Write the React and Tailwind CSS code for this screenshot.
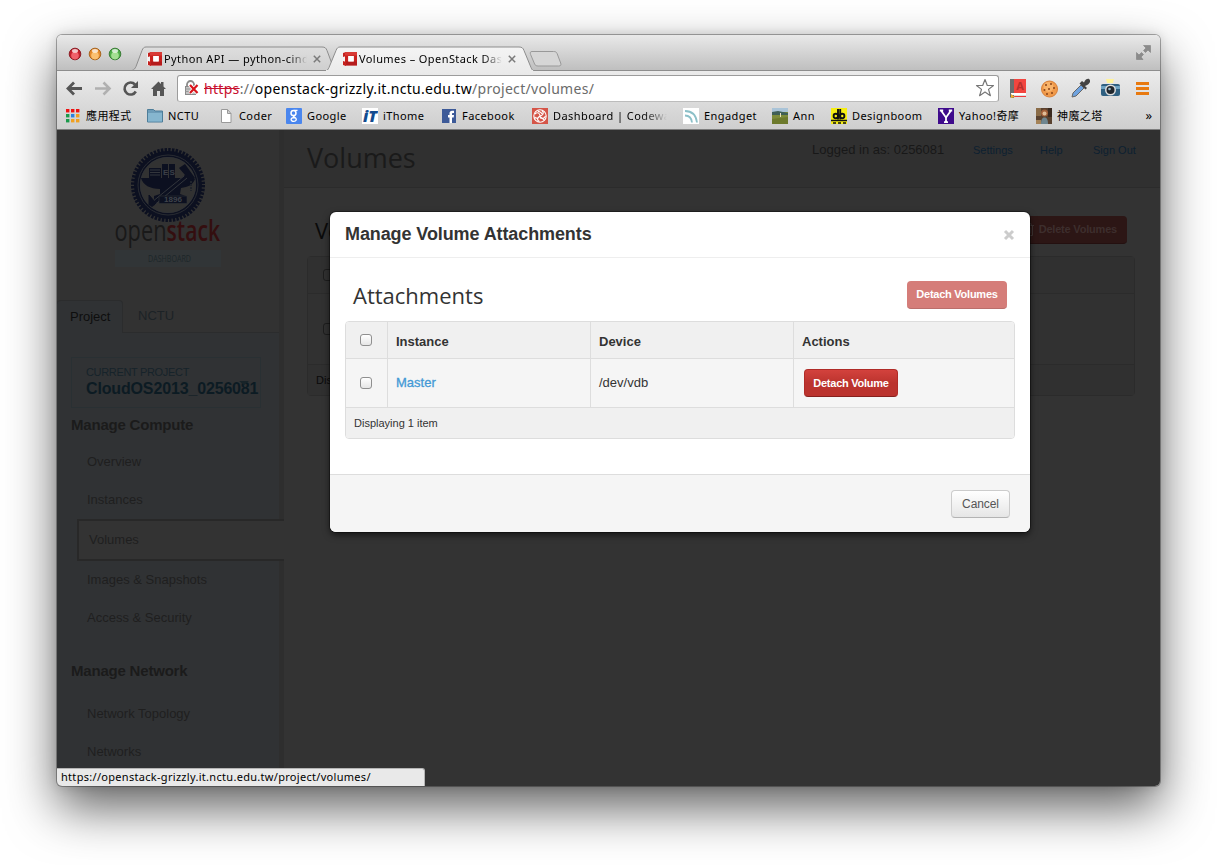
import React from "react";

const UI = "font-['Noto_Sans','Noto_Sans_CJK_TC',sans-serif]";

/* ---------- browser chrome icons ---------- */

function Favicon() {
  return (
    <svg width="16" height="16" viewBox="0 0 16 16" className="shrink-0">
      <path d="M0 2.5 3 1h12v14H2L0 13.5z" fill="#f4f0f0" />
      <path d="M1 2 4 1v4L1 6zM1 10l3 1v4l-3-1z" fill="#c4201d" />
      <path d="M3 1h12v13.5H3zM6.3 5v5.6h5.4V5z" fill="#c9211e" fillRule="evenodd" />
      <path d="M3 1h12v3.4H3z" fill="#d83a35" />
      <path d="M4 10.6h11v4H4z" fill="#a8181a" opacity=".6" />
      <path d="M6.3 5h5.4v5.6H6.3z" fill="#fff" />
    </svg>
  );
}

function TrafficLights() {
  const lights = [
    ["#f0606a", "#c41e2a", "#8d1f26"],
    ["#fbc070", "#e58a2a", "#a8651f"],
    ["#a4df92", "#4fae48", "#3b7d37"],
  ];
  return (
    <svg width="60" height="16" viewBox="0 0 60 16" className="shrink-0">
      {lights.map(([a, b, c], i) => (
        <g key={i}>
          <circle cx={8 + i * 20} cy="8" r="5.8" fill={b} stroke={c} strokeWidth="1" />
          <circle cx={8 + i * 20} cy="9.6" r="3.8" fill={a} />
          <ellipse cx={8 + i * 20} cy="4.9" rx="3" ry="1.8" fill="#fff" opacity=".75" />
        </g>
      ))}
    </svg>
  );
}

function TabClose() {
  return (
    <svg width="8" height="8" viewBox="0 0 8 8" className="shrink-0">
      <path d="M.8.8 7.2 7.2M7.2.8.8 7.2" stroke="#7a7a7a" strokeWidth="1.5" />
    </svg>
  );
}

function TabStrip() {
  return (
    <div className="flex h-[36px] w-full items-start justify-between bg-gradient-to-b from-[#e9e9e9] to-[#bebebe]">
      <div className="relative h-[36px] w-[520px]">
        <svg width="1103" height="36" viewBox="0 0 1103 36" className="absolute left-0 top-0">
          <defs>
            <linearGradient id="on" x1="0" y1="0" x2="0" y2="1">
              <stop offset="0" stopColor="#f4f4f4" />
              <stop offset="1" stopColor="#ebebeb" />
            </linearGradient>
            <linearGradient id="off" x1="0" y1="0" x2="0" y2="1">
              <stop offset="0" stopColor="#dedede" />
              <stop offset="1" stopColor="#cfcfcf" />
            </linearGradient>
          </defs>
          <path d="M0 35.5H1103" stroke="#8d8d8d" />
          <path d="M75 35.5c2-.5 3-2 4-4l6-16c1-2.500 2-3.500 4-3.500h176c3 0 4 1 5 3.500l6 16c.7 2 2 3.500 4 4z" fill="url(#off)" stroke="#8d8d8d" />
          <path d="M268 36.500c2-.5 3-2 4-4l7-17c1-2.500 2-3.500 4-3.500h179c3 0 4 1 5 3.500l7 17c.7 2 2 3.500 4 4z" fill="url(#on)" stroke="#8d8d8d" />
          <path d="M269 36h207" stroke="#ebebeb" strokeWidth="2" />
          <path d="M475 16.500h21.500c2 0 3 .6 3.600 2l3.600 9.500c.7 2 0 3-2 3h-20.500c-2 0-3-.6-3.600-2l-4-9.500c-.8-2-.2-3 1.400-3z" fill="#d6d6d6" stroke="#999" />
        </svg>
        <div className="relative flex h-[36px] items-center pt-[12px]">
          <div className="flex w-[73px] justify-start pb-[10px] pl-[10px]">
            <TrafficLights />
          </div>
          <div className="ml-[17px] flex w-[195px] items-center">
            <Favicon />
            <span className="ml-px w-[143px] overflow-hidden whitespace-nowrap bg-gradient-to-r from-black from-85% to-[#d6d6d6] bg-clip-text text-[11px] tracking-[0.42px] text-transparent">
              Python API — python-cinderclient
            </span>
            <span className="ml-[6px]"><TabClose /></span>
          </div>
          <div className="flex w-[185px] items-center">
            <Favicon />
            <span className="ml-px w-[143px] overflow-hidden whitespace-nowrap bg-gradient-to-r from-black from-85% to-[#efefef] bg-clip-text text-[11px] tracking-[0.42px] text-transparent">
              Volumes – OpenStack Dashboard
            </span>
            <span className="ml-[6px]"><TabClose /></span>
          </div>
        </div>
      </div>
      <svg width="15" height="15" viewBox="0 0 15 15" className="mr-[9px] mt-[10px]">
        <path d="M7.500.5H14.500V7.500L12 5 9.500 7.500 7.500 5.500 10 3zM7 14.500H.5V7.500L3 10l2.500-2.500L7.500 9.500 5 12z" fill="#8b8b8b" stroke="#777" strokeWidth=".5" />
      </svg>
    </div>
  );
}

function Toolbar() {
  return (
    <div className="flex h-[34px] items-center">
      <svg width="120" height="34" viewBox="0 0 120 34" className="shrink-0" fill="none">
        <path d="M25 17.500H11.500M17 11.500l-6 6 6 6" stroke="#555" strokeWidth="2.800" />
        <path d="M38 17.500H51.500M46.500 11.500l6 6-6 6" stroke="#b0b0b0" strokeWidth="2.600" />
        <path d="M78.800 20.500a6 6 0 1 1-.8-7" stroke="#555" strokeWidth="2.600" />
        <path d="M81 10v7h-7z" fill="#555" />
        <path d="M94 18l7.500-7.500 2.500 2.500v-2h2.500v4.500l2.500 2.500h-2v7h-4v-5h-3v5h-4v-7z" fill="#555" />
      </svg>
      <div className="flex h-[27px] w-[822px] items-center rounded-[3px] border border-[#9c9c9c] border-b-[#bcbcbc] bg-white">
        <svg width="17" height="18" viewBox="0 0 17 18" className="ml-[6px] shrink-0" fill="none">
          <path d="M3 8V5.500a3.500 3.500 0 0 1 7 0V8" stroke="#8a8a8a" strokeWidth="1.800" />
          <rect x="1.500" y="7.500" width="10" height="8" fill="#c4c4c4" stroke="#8a8a8a" />
          <path d="M1.500 10h10M1.500 12.500h10" stroke="#9a9a9a" />
          <path d="M6 6l7.500 8M13.500 6 6 14" stroke="#fff" strokeWidth="4" />
          <path d="M6 6l7.500 8M13.500 6 6 14" stroke="#d8141c" strokeWidth="2.200" />
        </svg>
        <span className="ml-[3px] flex-1 whitespace-nowrap text-[14px] tracking-[0.31px] text-[#6b6b6b]">
          <span className="text-[#c8102e] line-through decoration-[#c8102e]">https</span>://
          <span className="text-black">openstack-grizzly.it.nctu.edu.tw</span>/project/volumes/
        </span>
        <svg width="20" height="20" viewBox="0 0 20 20" className="mr-[3px]">
          <path d="M10 1.500l2.300 6h6.200l-5 3.900 1.900 6.300L10 14l-5.400 3.700 1.900-6.300-5-3.900h6.200z" fill="#fff" stroke="#777" strokeWidth="1.200" strokeLinejoin="round" />
        </svg>
      </div>
      <svg width="161" height="34" viewBox="0 0 161 34" className="shrink-0">
        <path d="M11 8h4v19h-3l-1-1z" fill="#6d6d6d" />
        <path d="M15 8h12v14H15z" fill="#f2453f" />
        <path d="M12 22h15v2H12z" fill="#fff" />
        <path d="M13 25h14v1H13z" fill="#ef3b3b" />
        <path d="M12 23l4 3-4 1z" fill="#f0b030" />
        <text x="21" y="19" textAnchor="middle" fontSize="11" fontWeight="bold" fill="#b8302c">A</text>
        <circle cx="50.500" cy="18" r="8" fill="#f09a4a" stroke="#d9813a" />
        <circle cx="49.500" cy="16" r="5" fill="#f8b36a" />
        <g fill="#8a4318">
          <circle cx="47" cy="14" r="1" /><circle cx="52" cy="13" r="1" /><circle cx="55" cy="17" r="1" />
          <circle cx="50" cy="18" r="1" /><circle cx="45.500" cy="19" r="1" /><circle cx="53" cy="22" r="1" /><circle cx="48" cy="23" r="1" />
        </g>
        <path d="M73 26l1-4 8-8 3 3-8 8z" fill="#6fa3e0" stroke="#666" />
        <path d="M80.500 12.500l6 6 1.500-1.500-2-2c3-1 5.500-3 5-5.500s-4-2.500-6 2l-2-1.500z" fill="#444" />
        <path d="M107 8h8l-1 4h-6z" fill="#fff39a" />
        <rect x="102" y="13" width="19" height="12" rx="2" fill="#2e5f80" />
        <path d="M102 15h19v3h-19z" fill="#6ea3c2" />
        <circle cx="111.500" cy="19" r="5.500" fill="#ddd" />
        <circle cx="111.500" cy="19" r="4" fill="#20262c" />
        <circle cx="110.500" cy="18" r="1.300" fill="#9bc" />
        <path d="M137 12.500h13M137 17.500h13M137 22.500h13" stroke="#e8790f" strokeWidth="3" />
      </svg>
    </div>
  );
}

/* ---------- bookmark icons ---------- */

const marks = {
  apps: (
    <g>
      {["#e11", "#e11", "#e11", "#1a9a4a", "#2a80e0", "#f0a020", "#1a9a4a", "#f0a020", "#f0a020"].map((c, i) => (
        <rect key={i} x={1 + (i % 3) * 5} y={1 + Math.floor(i / 3) * 5} width="3.400" height="3.400" fill={c} />
      ))}
    </g>
  ),
  folder: (
    <g>
      <path d="M.5 3V1.500h6L8 3h7.500v11H.5z" fill="#6d9cb8" stroke="#4d7d99" />
      <path d="M1 5h14v8.500H1z" fill="#86b6cf" />
    </g>
  ),
  doc: <path d="M3.500 1.500h6l3.500 4v9H3.500zM9.500 1.500v4H13" fill="#fff" stroke="#999" />,
  google: (
    <g>
      <rect width="16" height="16" rx="1" fill="#4a86ee" />
      <ellipse cx="7.500" cy="5" rx="2.500" ry="2.600" fill="none" stroke="#fff" strokeWidth="1.500" />
      <path d="M8 2.300h3.500M8 7.500c-2 1.200 2.500 1.800 2.300 4-.2 2.400-5.300 2.400-5.200 0 .1-1.500 2-2 3.700-2" fill="none" stroke="#fff" strokeWidth="1.300" />
    </g>
  ),
  it: (
    <g>
      <rect width="16" height="16" fill="#fff" />
      <text x="8" y="14" textAnchor="middle" fontSize="15" fontWeight="900" fontStyle="italic" textLength="14" lengthAdjust="spacingAndGlyphs" fill="#124c90">iT</text>
    </g>
  ),
  fb: (
    <g>
      <rect x="1" y="1" width="14" height="14" fill="#3d5a98" />
      <path d="M8.500 15V9.500H7V7h1.500V5.500C8.500 3.500 9.500 2.700 11 2.700h2V5h-1.200c-.6 0-.8.300-.8.800V7h2l-.3 2.500H11V15z" fill="#fff" />
    </g>
  ),
  codewars: (
    <g fill="none" stroke="#fff" strokeWidth="1.100">
      <rect width="16" height="16" fill="#d55548" stroke="none" />
      <circle cx="8" cy="8" r="6.200" />
      <path d="M3 6c3-3 5 0 5 2M10 2.500c3 3 0 5-2 5.500M13.500 8c-2 4-4 2-5.500.5M7.500 13.500C4 12 6 9 8 8M2.500 9c2 2 4 1 5.500-1M6 3c1 1 3 1 4 3M12 12c-1-2-2-2-4-2" />
    </g>
  ),
  engadget: (
    <g fill="none">
      <rect width="16" height="16" fill="#fff" />
      <path d="M2 3c7 0 11 4 12 11.500M2 7.500c4 0 6.500 2.500 7 7" stroke="#8cc0c8" strokeWidth="1.800" />
    </g>
  ),
  ann: (
    <g>
      <rect width="16" height="16" fill="#7d8c3a" />
      <path d="M0 0h16v4H0z" fill="#aac4d8" />
      <path d="M0 4l6-1 10 2v2H0z" fill="#3f5f57" />
      <path d="M0 11l16-2v7H0z" fill="#6d7a2c" />
      <path d="M8 5h1v4H8z" fill="#e8e2c0" />
    </g>
  ),
  db: (
    <g>
      <rect width="16" height="16" fill="#f6ee13" />
      <g fill="none" stroke="#111" strokeWidth="1.900">
        <circle cx="4.800" cy="8" r="2.200" /><circle cx="11.200" cy="8" r="2.200" />
        <path d="M7 1v10.500M9.200 1v10.500" />
      </g>
      <path d="M0 12.500h16M2 15h3M7 15h3M12 15h3" stroke="#111" strokeWidth="1.600" />
    </g>
  ),
  yahoo: (
    <g>
      <rect width="16" height="16" fill="#3f0b8c" />
      <path d="M3 2.500l5 7 5-7M8 9v5.500M1.800 2.500h3.400M10.800 2.500h3.400M6 14.200h4" fill="none" stroke="#fff" strokeWidth="1.800" />
    </g>
  ),
  tower: (
    <g>
      <rect width="16" height="16" fill="#5a4230" />
      <path d="M0 0h5v8H0z" fill="#8a6c48" />
      <path d="M12 0h4v9h-4z" fill="#3a2a20" />
      <circle cx="8.500" cy="5" r="3.500" fill="#a3603a" />
      <circle cx="8.500" cy="5.500" r="2" fill="#e0bd98" />
      <path d="M5 16c0-5 1.500-6.500 3.500-6.500S12 11 12 16z" fill="#6f8690" />
      <path d="M0 12h5v4H0z" fill="#a58358" />
    </g>
  ),
};

const bookmarks = [
  ["apps", "應用程式", "w-[82px]", ""],
  ["folder", "NCTU", "w-[71px]", ""],
  ["doc", "Coder", "w-[68px]", ""],
  ["google", "Google", "w-[76px]", ""],
  ["it", "iThome", "w-[79px]", ""],
  ["fb", "Facebook", "w-[91px]", ""],
  ["codewars", "Dashboard | Codewars", "w-[151px]", "w-[114px]"],
  ["engadget", "Engadget", "w-[89px]", ""],
  ["ann", "Ann", "w-[59px]", ""],
  ["db", "Designboom", "w-[107px]", ""],
  ["yahoo", "Yahoo!奇摩", "w-[98px]", ""],
  ["tower", "神魔之塔", "w-[100px]", ""],
];

function Bookmarks() {
  return (
    <div className="flex h-[24px] items-center justify-between pl-[8px] pr-[8px] text-[11px] text-black">
      <div className="flex pb-[2px]">
        {bookmarks.map(([id, label, w, tw]) => (
          <div key={id} className={"flex shrink-0 items-center gap-[5px] whitespace-nowrap " + w}>
            <svg width="16" height="16" viewBox="0 0 16 16" className="shrink-0">{marks[id]}</svg>
            {tw ? (
              <span className={"overflow-hidden bg-gradient-to-r from-black from-75% to-[#d4d4d4] bg-clip-text tracking-[0.42px] text-transparent " + tw}>{label}</span>
            ) : (
              <span className="tracking-[0.42px]">{label}</span>
            )}
          </div>
        ))}
      </div>
      <span className="pb-[3px] text-[13px]">»</span>
    </div>
  );
}

/* ---------- dashboard page behind the backdrop ---------- */

function SealLogo() {
  return (
    <svg width="120" height="124" viewBox="0 0 120 124">
      <circle cx="60" cy="40" r="35" fill="none" stroke="#0c1020" strokeWidth="4" strokeDasharray="2.400 1.265" />
      <circle cx="60" cy="40" r="31" fill="none" stroke="#0c1020" strokeWidth="6" />
      <circle cx="60" cy="40" r="30" fill="none" stroke="#303236" strokeWidth=".8" />
      <circle cx="60" cy="40" r="27.500" fill="none" stroke="#303236" strokeWidth="1" />
      <path d="M33 33h41l4-2 9 3c-2 6-7 8-14 9l-1 6 6 2v4H46v-4l6-2v-5c-10 0-17-4-19-11z" fill="#0c1020" />
      <path d="M41 23h12v10H41zM54 19h6v14h-6zM61 19h6v14h-6z" fill="#0c1020" />
      <path d="M42 25h10M42 27.500h10M42 30h10" stroke="#33363c" />
      <text x="55" y="30" fontSize="8" fill="#3c4048" fontWeight="bold">E</text>
      <text x="61.500" y="30" fontSize="8" fill="#3c4048" fontWeight="bold">S</text>
      <path d="M41 60 46 56 77 30 71 23l6-4 10 14-5 4-4-4-30 26-4 3z" fill="#0c1020" />
      <path d="M44 57 76 31M47 59.500 79 33" stroke="#33363c" strokeWidth="1" />
      <path d="M41 50v10l6-3zM42 53l6 6" stroke="#0c1020" fill="#0c1020" />
      <rect x="51" y="51" width="28" height="7.500" fill="#0c1020" stroke="#303236" strokeWidth=".6" />
      <text x="65" y="57.300" fontSize="6.500" fontWeight="bold" textAnchor="middle" textLength="18" lengthAdjust="spacingAndGlyphs" fill="#3f434a">1896</text>
      <path d="M83 36v10" stroke="#20242c" strokeWidth="2" strokeDasharray="2 1" />
      <g fontFamily="'Open Sans', sans-serif" fontSize="29">
        <text x="6.500" y="95.500" textLength="52" lengthAdjust="spacingAndGlyphs" fill="#191919">open</text>
        <text x="58.500" y="95.500" textLength="53.500" lengthAdjust="spacingAndGlyphs" fill="#340e0f" fontWeight="600">stack</text>
      </g>
      <rect x="7" y="105" width="106" height="17" fill="#313537" />
      <text x="40" y="117" fontFamily="'Open Sans', sans-serif" fontSize="9" textLength="43" lengthAdjust="spacingAndGlyphs" fill="#1c2629">DASHBOARD</text>
    </svg>
  );
}

function NavItem({ children }) {
  return <div className="flex h-[38px] items-center pl-[30px] text-[13px] text-[#1f1f1f]">{children}</div>;
}

function Sidebar() {
  return (
    <div className="flex h-full w-[227px] shrink-0 flex-col border-r-[5px] border-[#2e2e2e] bg-[#303234]">
      <div className="flex h-[170px] justify-center bg-[#323232] pt-[15px]">
        <SealLogo />
      </div>
      <div className="flex h-[33px] bg-[#323232] text-[13px]">
        <div className="flex w-[66px] items-center rounded-t-[4px] border-r border-t border-[#2b2c2d] bg-[#303234] pl-[13px] text-[#0e0e0e]">Project</div>
        <div className="flex flex-1 items-center border-b border-[#2b2c2d] pl-[15px] text-[#1c2226]">NCTU</div>
      </div>
      <div className="ml-[14px] mt-[24px] flex h-[51px] w-[190px] flex-col border border-[#293033] pl-[14px] pt-[7px]">
        <div className="text-[11px] leading-[14px] tracking-[-0.33px] text-[#16232a]">CURRENT PROJECT</div>
        <div className="relative text-[16px] font-bold leading-[20px] tracking-[-0.15px] text-[#0c1b23]">
          CloudOS2013_0256081
          <span className="absolute left-[153px] top-[2px] border-x-[5px] border-t-[4px] border-x-transparent border-t-[#182429]" />
        </div>
      </div>
      <div className="flex h-[35px] items-center pl-[14px] text-[15px] font-bold tracking-[-0.2px] text-[#1b1b1b]">Manage Compute</div>
      <NavItem>Overview</NavItem>
      <NavItem>Instances</NavItem>
      <div className="relative z-10 ml-[20px] mr-[-5px] flex h-[42px] items-center border-2 border-r-0 border-[#282828] bg-[#333] pl-[10px] text-[13px] text-[#1f1f1f]">Volumes</div>
      <NavItem>Images &amp; Snapshots</NavItem>
      <NavItem>Access &amp; Security</NavItem>
      <div className="mt-[10px] flex h-[48px] items-center pl-[14px] text-[15px] font-bold tracking-[-0.2px] text-[#1b1b1b]">Manage Network</div>
      <NavItem>Network Topology</NavItem>
      <NavItem>Networks</NavItem>
    </div>
  );
}

function DarkCheck() {
  return <span className="block h-[12px] w-[12px] rounded-[3px] border border-[#1d1d1d] bg-[#313131]" />;
}

function MainPage() {
  return (
    <div className="flex h-full flex-1 flex-col bg-[#333]">
      <div className="flex h-[58px] items-start justify-between border-b border-[#2b2b2b] bg-[#303030] pl-[23px] pr-[25px]">
        <div className="pt-[8px] font-['Open_Sans',sans-serif] text-[27px] leading-[40px] text-[#1a1a1a]">Volumes</div>
        <div className="flex items-center pt-[11px] text-[11px] leading-[18px] text-[#0d2030]">
          <span className="w-[161px] whitespace-nowrap text-[13px] text-[#181818]">Logged in as: 0256081</span>
          <span className="w-[67px]">Settings</span>
          <span className="w-[53px]">Help</span>
          <span className="w-[42px] whitespace-nowrap">Sign Out</span>
        </div>
      </div>
      <div className="flex h-[68px] items-start justify-between pl-[31px] pr-[33px] pt-[28px]">
        <div className="font-['Open_Sans',sans-serif] text-[22px] leading-[28px] text-[#0a0a0a]">Volumes</div>
        <div className="flex h-[28px] w-[128px] items-center justify-end gap-[5px] rounded-[4px] border-b border-[#241010] bg-[#2c1615] pr-[10px] text-[11px] font-bold tracking-[-0.2px] text-[#3d2e2d]">
          <svg width="10" height="13" viewBox="0 0 10 13" fill="none" stroke="#3d3332">
            <path d="M0 2.500h10M3 2.500v-2h4v2M1.500 2.500v10h7v-10M3.700 4.500v6M6.300 4.500v6" />
          </svg>
          Delete Volumes
        </div>
      </div>
      <div className="ml-[23px] flex h-[140px] w-[828px] flex-col rounded-[4px] border border-[#2b2b2b] text-[11px] text-[#0a0a0a]">
        <div className="flex h-[37px] items-center border-b border-[#2b2b2b] bg-[#303030] pl-[15px]"><DarkCheck /></div>
        <div className="flex h-[71px] items-center border-b border-[#2b2b2b] bg-[#313131] pl-[15px]"><DarkCheck /></div>
        <div className="flex flex-1 items-center bg-[#303030] pl-[8px]">Displaying 1 item</div>
      </div>
    </div>
  );
}

/* ---------- modal ---------- */

function Check() {
  return <span className="block h-[12px] w-[12px] rounded-[3px] border border-[#8f8f8f] bg-gradient-to-b from-white to-[#e6e6e6]" />;
}

function Modal() {
  return (
    <div className="absolute left-[273px] top-[82px] z-20 flex h-[320px] w-[700px] flex-col overflow-hidden rounded-[6px] bg-white text-[13px] text-[#333] shadow-[0_3px_7px_rgba(0,0,0,0.6),0_0_0_1px_rgba(0,0,0,0.35)]">
      <div className="flex h-[46px] items-center justify-between border-b border-[#eee] pl-[15px] pr-[15px]">
        <h3 className="text-[18px] font-bold tracking-[-0.1px]">Manage Volume Attachments</h3>
        <svg width="12" height="12" viewBox="0 0 12 12"><path d="M2 2l8 8M10 2l-8 8" stroke="#ccc" strokeWidth="3" /></svg>
      </div>
      <div className="flex h-[216px] flex-col px-[15px] pt-[23px]">
        <div className="flex h-[40px] items-start justify-between pl-[8px] pr-[8px]">
          <h3 className="font-['Open_Sans',sans-serif] text-[22px] leading-[28px]">Attachments</h3>
          <div className="flex h-[28px] w-[100px] items-center justify-center whitespace-nowrap rounded-[4px] border-b border-[#bb6e6b] bg-[#d57d79] text-[11px] font-bold tracking-[-0.25px] text-white">Detach Volumes</div>
        </div>
        <div className="h-[118px] overflow-hidden rounded-[4px] border border-[#ddd]">
          <div className="grid h-[37px] grid-cols-[42px_203px_203px_1fr] border-b border-[#ddd] bg-[#f0f0f0] font-bold">
            <div className="flex items-center border-r border-[#ddd] pl-[14px]"><Check /></div>
            <div className="flex items-center border-r border-[#ddd] pl-[8px] pt-[3px]">Instance</div>
            <div className="flex items-center border-r border-[#ddd] pl-[8px] pt-[3px]">Device</div>
            <div className="flex items-center pl-[8px] pt-[3px]">Actions</div>
          </div>
          <div className="grid h-[49px] grid-cols-[42px_203px_203px_1fr] border-b border-[#ddd] bg-[#f5f5f5]">
            <div className="flex items-center border-r border-[#ddd] pl-[14px]"><Check /></div>
            <div className="flex items-center border-r border-[#ddd] pl-[8px] font-medium text-[#4399d5] [-webkit-text-stroke:0.3px_#4399d5]">Master</div>
            <div className="flex items-center border-r border-[#ddd] pl-[8px]">/dev/vdb</div>
            <div className="flex items-center pl-[10px]">
              <div className="flex h-[28px] w-[94px] items-center justify-center whitespace-nowrap rounded-[4px] border border-[#b02c28] border-b-[#86201d] bg-gradient-to-b from-[#d3423d] to-[#bb332e] to-50% text-[11px] font-bold tracking-[-0.25px] text-white">Detach Volume</div>
            </div>
          </div>
          <div className="flex h-[30px] items-center bg-[#f0f0f0] pl-[8px] text-[11px]">Displaying 1 item</div>
        </div>
      </div>
      <div className="flex flex-1 items-start justify-end border-t border-[#ddd] bg-[#f5f5f5] pr-[20px] pt-[15px]">
        <div className="flex h-[28px] w-[59px] items-center justify-center rounded-[4px] border border-[#ccc] border-b-[#b3b3b3] bg-gradient-to-b from-white to-[#e6e6e6] text-[12px] tracking-[-0.1px] text-[#555]">Cancel</div>
      </div>
    </div>
  );
}

export default function App() {
  return (
    <div className="h-[865px] w-[1217px] overflow-hidden bg-white pl-[57px] pt-[35px]">
      <div className="h-[751px] w-[1103px] rounded-[5px] shadow-[0_22px_50px_rgba(0,0,0,0.62),0_0_12px_rgba(0,0,0,0.15),0_0_0_1px_rgba(0,0,0,0.3)]">
        <div className="flex h-full flex-col overflow-hidden rounded-[5px]">
          <div className={"shrink-0 " + UI}>
            <TabStrip />
            <div className="h-[59px] border-b border-[#7d7d7d] bg-gradient-to-b from-[#ebebeb] to-[#cecece]">
              <Toolbar />
              <Bookmarks />
            </div>
          </div>
          <div className="relative flex h-[657px] overflow-hidden font-['Liberation_Sans',sans-serif]">
            <Sidebar />
            <MainPage />
            <Modal />
            <div className={"absolute bottom-0 left-0 z-20 flex h-[18px] w-[368px] items-center rounded-tr-[3px] border-r border-t border-[#b5b5b5] bg-[#e9e9e9] pl-[4px] text-[11px] tracking-[0.3px] text-black " + UI}>
              https://openstack-grizzly.it.nctu.edu.tw/project/volumes/
            </div>
          </div>
        </div>
      </div>
    </div>
  );
}
